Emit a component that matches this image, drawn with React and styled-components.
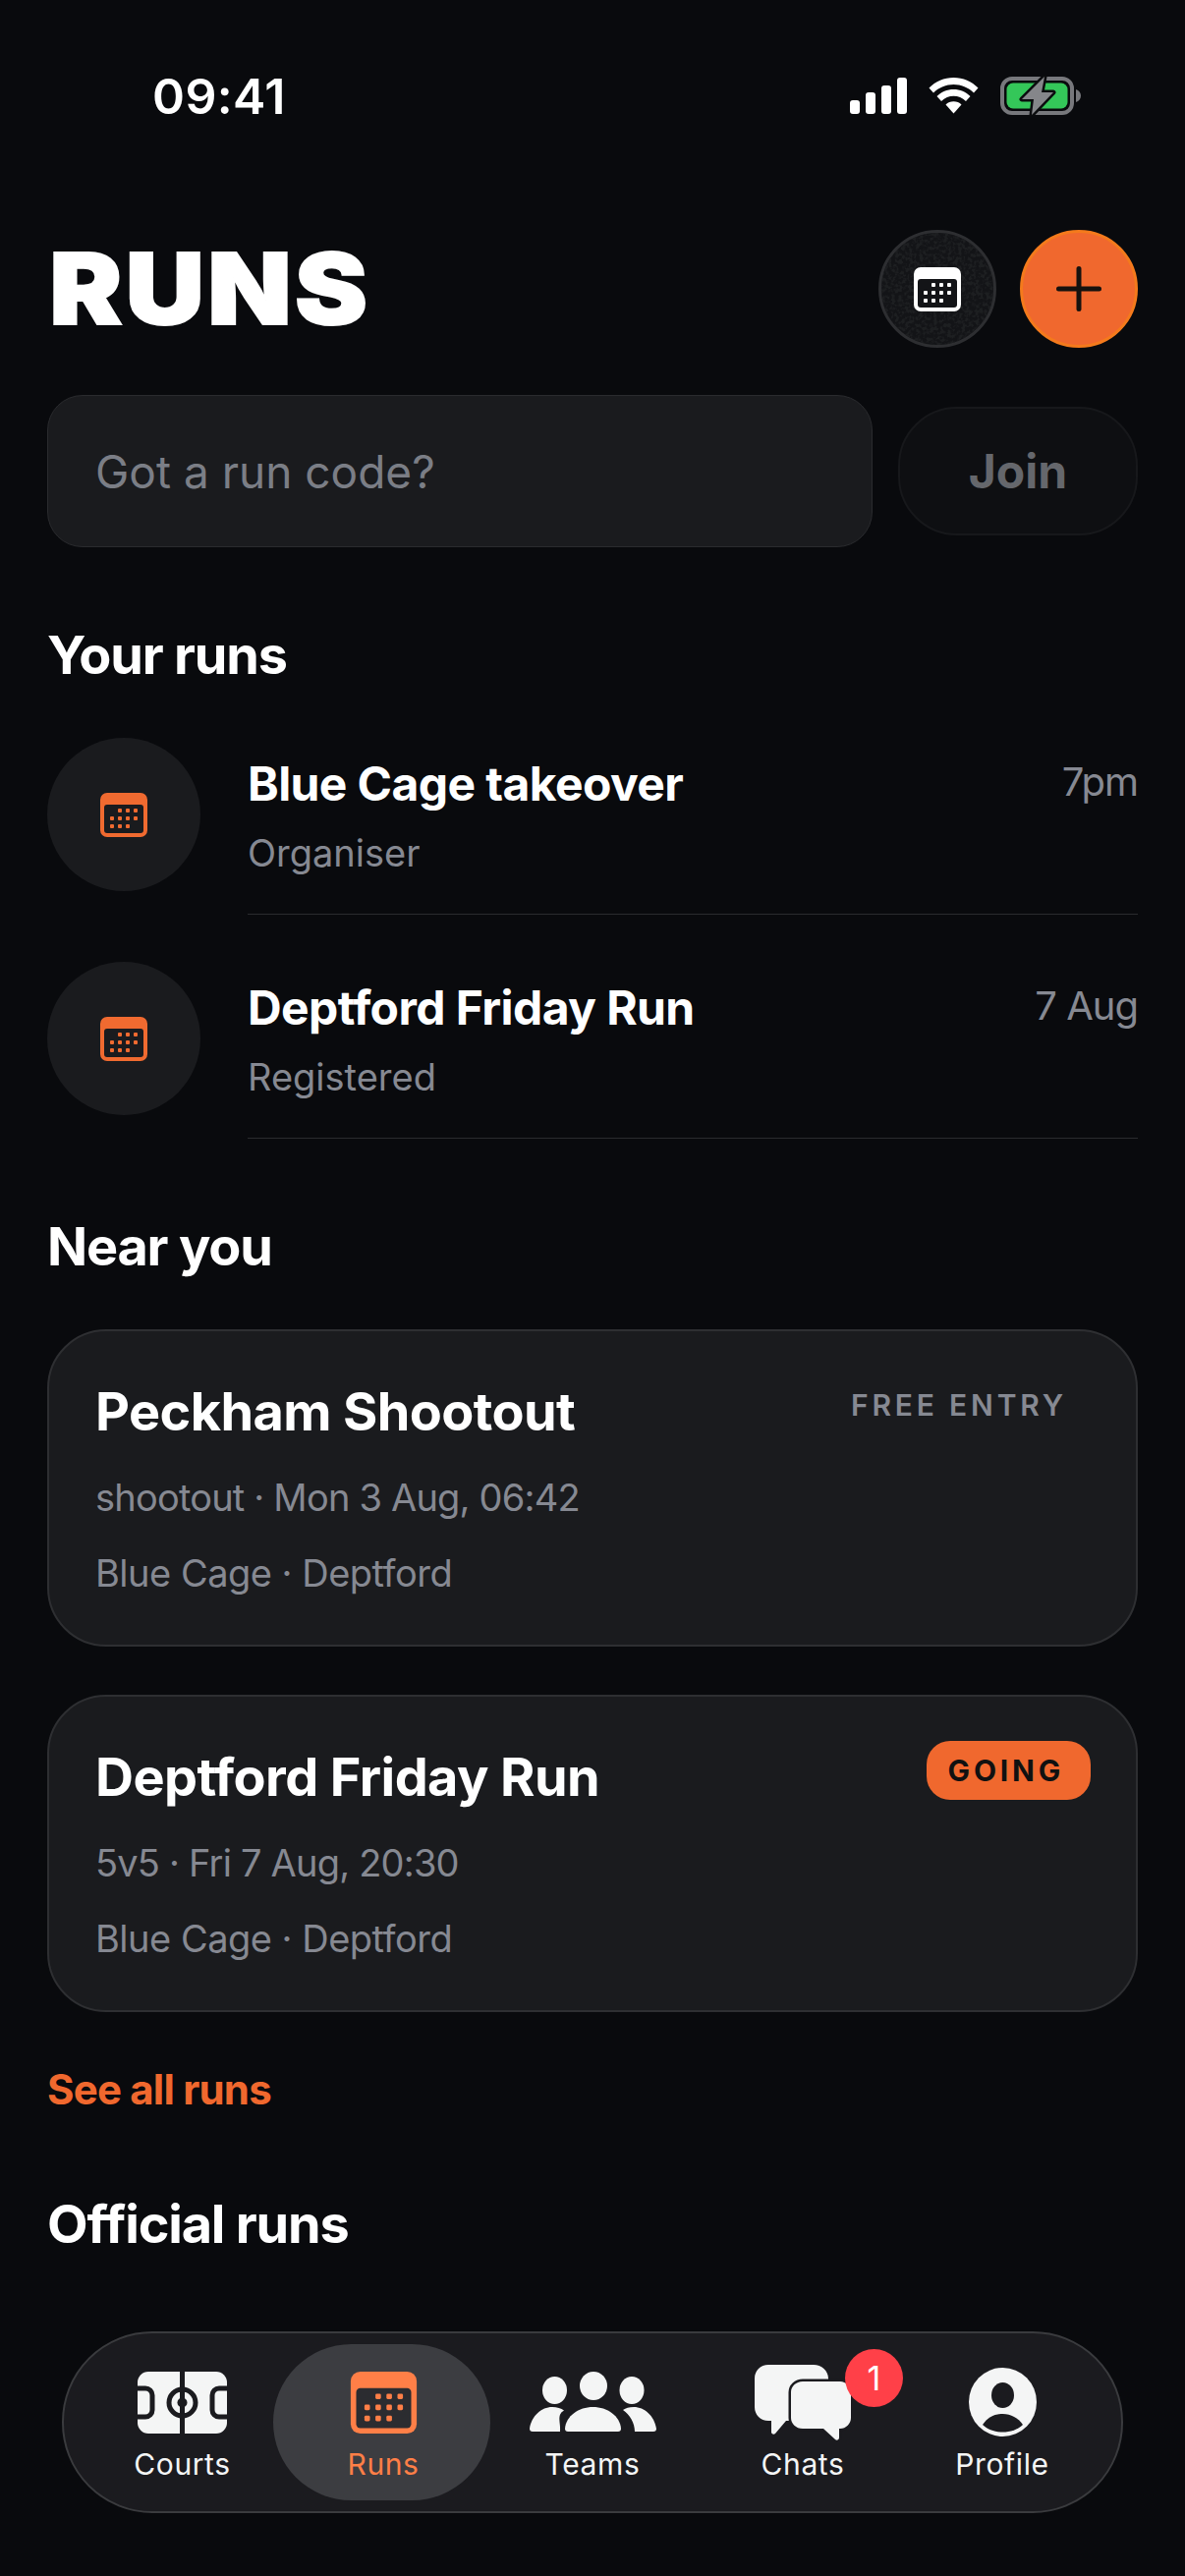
import React from 'react';
import styled, { createGlobalStyle } from 'styled-components';

const GlobalStyle = createGlobalStyle`
    * { box-sizing: border-box; }
    html, body {
        margin: 0;
        background: #090a0d;
        font-family: Inter, "Liberation Sans", sans-serif;
    }
`;

const yourRuns = [
    { title: 'Blue Cage takeover', role: 'Organiser', when: '7pm' },
    { title: 'Deptford Friday Run', role: 'Registered', when: '7 Aug' },
];

const nearRuns = [
    { title: 'Peckham Shootout', meta: 'shootout · Mon 3 Aug, 06:42', place: 'Blue Cage · Deptford', tag: 'FREE ENTRY' },
    { title: 'Deptford Friday Run', meta: '5v5 · Fri 7 Aug, 20:30', place: 'Blue Cage · Deptford', tag: 'GOING', going: true },
];

const DOTS = [
    [20, 18], [28, 18], [36, 18],
    [12, 26], [20, 26], [28, 26], [36, 26],
    [12, 34], [20, 34], [28, 34],
];

const CalendarIcon = ({ width = 48, height = 45, color, hole }) => (
    <svg width={ width } height={ height } viewBox="0 0 48 45">
        <rect width="48" height="45" rx="7" fill={ color } />
        <rect x="4" y="12" width="40" height="29" rx="3" fill={ hole } />
        { DOTS.map(([x, y]) => (
            <rect key={ `${x}-${y}` } x={ x - 2 } y={ y - 2 } width="4" height="4" rx="1" fill={ color } />
        )) }
    </svg>
);

const PlusIcon = () => (
    <svg width="46" height="46" viewBox="0 0 46 46" stroke="#16120f" strokeWidth="5" strokeLinecap="round">
        <path d="M23 2.5v41M2.5 23h41" />
    </svg>
);

// grainy fill of the calendar button
const Grain = () => (
    <GrainLayer width="114" height="114" viewBox="0 0 114 114">
        <filter id="grain" x="0" y="0" width="100%" height="100%" colorInterpolationFilters="sRGB">
            <feTurbulence type="fractalNoise" baseFrequency="0.28" numOctaves="2" seed="4" />
            <feColorMatrix values="0 0 0 0 0.115  0 0 0 0 0.12  0 0 0 0 0.13  5 0 0 0 -2.2" />
        </filter>
        <rect width="114" height="114" filter="url(#grain)" />
    </GrainLayer>
);

const SignalIcon = () => (
    <svg width="58" height="37" viewBox="0 0 58 37" fill="#fff">
        <rect x="0" y="23" width="10" height="14" rx="3" />
        <rect x="16" y="15" width="10" height="22" rx="3" />
        <rect x="32" y="8" width="10" height="29" rx="3" />
        <rect x="48" y="0" width="10" height="37" rx="3" />
    </svg>
);

const WifiIcon = () => (
    <svg width="51" height="37" viewBox="0 0 51 37" fill="#fff">
        <path d="M0.5 10.5C7 4 16 0 25.5 0S44 4 50.5 10.5L46 15.5C40.5 10 33 7 25.5 7S10.5 10 5 15.5Z" />
        <path d="M8.5 19C13 14.5 19 12 25.5 12S38 14.5 42.5 19L38 24C34.5 20.5 30 18.8 25.5 18.8S16.5 20.5 13 24Z" />
        <path d="M17.5 27.5C19.5 25.5 22.5 24.3 25.5 24.3S31.5 25.5 33.5 27.5L25.5 36.5Z" />
    </svg>
);

const BatteryIcon = () => (
    <svg width="82" height="41" viewBox="0 0 82 41">
        <rect x="2" y="3" width="71" height="35" rx="10" fill="none" stroke="#77787c" strokeWidth="4" />
        <rect x="6.5" y="7.5" width="62" height="26" rx="6.5" fill="#34c759" />
        <path d="M77 14c3 1 5 3.500 5 6.500s-2 5.500-5 6.500z" fill="#77787c" />
        <path
            d="M45 1L22 24H34L32 40L54 17H42Z"
            fill="#85868a"
            stroke="#0b0c0e"
            strokeWidth="5"
            strokeLinejoin="round"
            paintOrder="stroke"
        />
    </svg>
);

const CourtIcon = () => (
    <svg width="91" height="63" viewBox="0 0 91 63">
        <rect width="91" height="63" rx="11" fill="#f4f5f5" />
        <g fill="none" stroke="#1b1b1f" strokeWidth="5">
            <path d="M45.500 0v63" />
            <circle cx="45.500" cy="31.500" r="13.500" />
            <path d="M0 17h8a7 7 0 0 1 7 7v15a7 7 0 0 1-7 7H0" />
            <path d="M91 17h-8a7 7 0 0 0-7 7v15a7 7 0 0 0 7 7h8" />
        </g>
        <circle cx="45.500" cy="31.500" r="5" fill="#1b1b1f" />
    </svg>
);

const TeamsIcon = () => (
    <svg width="130" height="62" viewBox="0 0 130 62" fill="#f4f5f5">
        <ellipse cx="26.500" cy="19" rx="12.500" ry="14" />
        <ellipse cx="66" cy="14.500" rx="14" ry="14.500" />
        <ellipse cx="105" cy="19" rx="12.500" ry="14" />
        <path d="M37 58C38 45 51 36 65.500 36S93 45 94 58a3 3 0 0 1-3 3H40a3 3 0 0 1-3-3Z" />
        <path d="M1 58C3 45 13 36 24 36c5 0 9 1.500 12 3.500C28 44 33 52 32 61H4a3 3 0 0 1-3-3Z" />
        <path d="M130 58C128 45 118 36 107 36c-5 0-8 1-11 3 7 5 12 13 12 22H127a3 3 0 0 0 3-3Z" />
    </svg>
);

const ChatsIcon = () => (
    <svg width="98" height="77" viewBox="0 0 98 77" fill="#f4f5f5">
        <path d="M14 0H60c8 0 15 6 15 14v43H32L21 70c-1.500 1.500-4 .5-4-1.500V57H14C6 57 0 51 0 43V14C0 6 6 0 14 0Z" />
        <path
            d="M49 17H87c6 0 11 5 11 11V54c0 6-5 11-11 11H86V74c0 2.500-2.500 3.500-4 2L70 65H49c-7 0-12-5-12-11V28c0-6 5-11 12-11Z"
            stroke="#1b1b1f"
            strokeWidth="5"
            paintOrder="stroke"
        />
    </svg>
);

const ProfileIcon = () => (
    <svg width="69" height="70" viewBox="0 0 69 70">
        <ellipse cx="34.500" cy="35" rx="34.500" ry="35" fill="#f4f5f5" />
        <ellipse cx="34.500" cy="28" rx="11.500" ry="13" fill="#1b1b1f" />
        <path d="M14 58C19 51 26 47 34.500 47S50 51 55 58C50 63 42 65.500 34.500 65.500S19 63 14 58Z" fill="#1b1b1f" />
    </svg>
);

const App = () => (
    <Page>
        <GlobalStyle />
        <StatusBar>
            <Clock>09:41</Clock>
            <StatusIcons>
                <SignalIcon />
                <WifiIcon />
                <BatteryIcon />
            </StatusIcons>
        </StatusBar>

        <Header>
            <PageTitle>RUNS</PageTitle>
            <HeaderActions>
                <RoundButton aria-label="Calendar">
                    <Grain />
                    <CalendarIcon color="#fff" hole="#131417" />
                </RoundButton>
                <RoundButton $primary aria-label="New run">
                    <PlusIcon />
                </RoundButton>
            </HeaderActions>
        </Header>

        <JoinRow>
            <CodeInput placeholder="Got a run code?" />
            <JoinButton>Join</JoinButton>
        </JoinRow>

        <SectionTitle>Your runs</SectionTitle>
        { yourRuns.map(run => (
            <RunRow key={ run.title }>
                <RunAvatar>
                    <CalendarIcon color="#f06a30" hole="#1a1b1e" />
                </RunAvatar>
                <RunBody>
                    <RunTitleLine>
                        <RunTitle>{ run.title }</RunTitle>
                        <RunWhen>{ run.when }</RunWhen>
                    </RunTitleLine>
                    <RunRole>{ run.role }</RunRole>
                </RunBody>
            </RunRow>
        )) }

        <SectionTitle>Near you</SectionTitle>
        <CardList>
            { nearRuns.map(run => (
                <Card key={ run.title }>
                    <CardTop>
                        <CardTitle>{ run.title }</CardTitle>
                        <Tag $going={ run.going }>{ run.tag }</Tag>
                    </CardTop>
                    <CardMeta>{ run.meta }</CardMeta>
                    <CardPlace>{ run.place }</CardPlace>
                </Card>
            )) }
        </CardList>

        <SeeAll>See all runs</SeeAll>
        <SectionTitle>Official runs</SectionTitle>

        <TabBar>
            <Tab>
                <TabIcon><CourtIcon /></TabIcon>
                <TabLabel>Courts</TabLabel>
            </Tab>
            <Tab $active>
                <TabIcon><CalendarIcon width={ 69 } height={ 63 } color="#ff7f47" hole="#2b2c30" /></TabIcon>
                <TabLabel $active>Runs</TabLabel>
            </Tab>
            <Tab>
                <TabIcon><TeamsIcon /></TabIcon>
                <TabLabel>Teams</TabLabel>
            </Tab>
            <Tab>
                <TabIcon>
                    <ChatsIcon />
                    <Badge>1</Badge>
                </TabIcon>
                <TabLabel>Chats</TabLabel>
            </Tab>
            <Tab>
                <TabIcon><ProfileIcon /></TabIcon>
                <TabLabel>Profile</TabLabel>
            </Tab>
        </TabBar>
    </Page>
);

const Page = styled.div`
    position: relative;
    width: 1206px;
    height: 2622px;
    padding: 0 48px;
    overflow: hidden;
    background: #090a0d;
    color: #fff;
`;

const StatusBar = styled.div`
    display: flex;
    justify-content: space-between;
    align-items: flex-start;
    height: 234px;
    padding: 70px 58px 0 107px;
`;

const Clock = styled.div`
    font-size: 50px;
    line-height: 56px;
    font-weight: 600;
    letter-spacing: 0.4px;
`;

const StatusIcons = styled.div`
    display: flex;
    align-items: center;
    gap: 22px;
    margin-top: 7px;
`;

const Header = styled.div`
    display: flex;
    justify-content: space-between;
    align-items: center;
    height: 120px;
`;

const PageTitle = styled.h1`
    margin: 0;
    padding-left: 2px;
    font-size: 100px;
    line-height: 120px;
    font-weight: 900;
    letter-spacing: 3px;
    -webkit-text-stroke: 2px #fff;
    transform: scaleX(1.11);
    transform-origin: left center;
`;

const HeaderActions = styled.div`
    display: flex;
    gap: 24px;
`;

const RoundButton = styled.button`
    position: relative;
    display: flex;
    align-items: center;
    justify-content: center;
    width: 120px;
    height: 120px;
    padding: 0;
    border-radius: 50%;
    border: 3px solid ${ ({ $primary }) => $primary ? '#f47a1c' : '#2d2e31' };
    background: ${ ({ $primary }) => $primary ? '#f0682e' : '#131417' };
    overflow: hidden;
    svg {
        position: relative;
    }
`;

const GrainLayer = styled.svg`
    && {
        position: absolute;
    }
    inset: 0;
`;

const JoinRow = styled.div`
    display: flex;
    align-items: center;
    gap: 26px;
    margin-top: 48px;
`;

const CodeInput = styled.input`
    width: 840px;
    height: 155px;
    padding: 0 48px;
    border: 1px solid #2a2b2e;
    border-radius: 36px;
    outline: 0;
    background: #1a1b1e;
    color: #fff;
    font-family: inherit;
    font-size: 46px;
    &::placeholder {
        color: #7b7e86;
        opacity: 1;
    }
`;

const JoinButton = styled.button`
    width: 244px;
    height: 131px;
    padding: 0;
    border: 2px solid #17181b;
    border-radius: 60px;
    background: #0e0f12;
    color: #65676c;
    font-family: inherit;
    font-size: 48px;
    font-weight: 700;
`;

const SectionTitle = styled.h2`
    margin: 80px 0 54px;
    font-size: 54px;
    line-height: 60px;
    font-weight: 700;
    letter-spacing: -1.2px;
`;

const RunRow = styled.div`
    display: flex;
    gap: 48px;
    margin-bottom: 48px;
    &:last-of-type {
        margin-bottom: 0;
    }
`;

const RunAvatar = styled.div`
    display: flex;
    flex: none;
    align-items: center;
    justify-content: center;
    width: 156px;
    height: 156px;
    border-radius: 50%;
    background: #1a1b1e;
`;

const RunBody = styled.div`
    flex: 1;
    padding: 22px 0 42px;
    border-bottom: 1px solid #2a2b2e;
`;

const RunTitleLine = styled.div`
    display: flex;
    justify-content: space-between;
    align-items: flex-start;
`;

const RunTitle = styled.div`
    font-size: 48px;
    line-height: 50px;
    font-weight: 700;
    letter-spacing: -0.6px;
`;

const RunWhen = styled.div`
    margin-top: -2px;
    font-size: 40px;
    line-height: 50px;
    letter-spacing: -1px;
    color: #868992;
`;

const RunRole = styled.div`
    margin-top: 25px;
    font-size: 38px;
    line-height: 40px;
    color: #868992;
`;

const CardList = styled.div`
    display: flex;
    flex-direction: column;
    gap: 49px;
`;

const Card = styled.div`
    height: 323px;
    padding: 45px 46px 0 47px;
    border: 2px solid #2e2f32;
    border-radius: 60px;
    background: #1a1b1e;
`;

const CardTop = styled.div`
    display: flex;
    justify-content: space-between;
    align-items: flex-start;
`;

const CardTitle = styled.div`
    margin-top: 9px;
    font-size: 54px;
    line-height: 56px;
    font-weight: 700;
    letter-spacing: -0.6px;
`;

const Tag = styled.div`
    height: 60px;
    padding: 0 ${ ({ $going }) => $going ? '27px 0 22px' : '24px 0 0' };
    border-radius: 24px;
    font-size: 30px;
    line-height: 60px;
    letter-spacing: 3.8px;
    font-weight: ${ ({ $going }) => $going ? 700 : 600 };
    background: ${ ({ $going }) => $going ? '#f0682e' : 'transparent' };
    color: ${ ({ $going }) => $going ? '#111' : '#868992' };
`;

const CardMeta = styled.div`
    margin-top: 37px;
    font-size: 38px;
    line-height: 44px;
    letter-spacing: -0.8px;
    color: #868992;
`;

const CardPlace = styled(CardMeta)`
    margin-top: 33px;
    letter-spacing: -0.5px;
`;

const SeeAll = styled.div`
    margin-top: 54px;
    padding-bottom: 2px;
    font-size: 42px;
    line-height: 50px;
    font-weight: 700;
    letter-spacing: -0.8px;
    color: #f0682e;
`;

const TabBar = styled.nav`
    position: absolute;
    left: 63px;
    bottom: 64px;
    display: grid;
    grid-template-columns: 185px 221px 208px 220px 186px;
    width: 1080px;
    height: 185px;
    padding: 11px 28px;
    border: 2px solid #3a3b3e;
    border-radius: 92px;
    background: #1b1b1f;
`;

const Tab = styled.div`
    display: flex;
    flex-direction: column;
    align-items: center;
    padding-left: ${ ({ $active }) => $active ? '3px' : '0' };
    border-radius: 80px;
    background: ${ ({ $active }) => $active ? '#3c3d41' : 'transparent' };
`;

const TabIcon = styled.div`
    position: relative;
    display: flex;
    align-items: center;
    justify-content: center;
    height: 70px;
    margin-top: 24px;
`;

const TabLabel = styled.div`
    margin-top: 8px;
    font-size: 30px;
    line-height: 40px;
    font-weight: 400;
    letter-spacing: 0.6px;
    color: ${ ({ $active }) => $active ? '#ff7f47' : '#f4f5f5' };
`;

const Badge = styled.div`
    position: absolute;
    top: -19px;
    right: -53px;
    width: 59px;
    height: 59px;
    border-radius: 50%;
    background: #ff4048;
    color: #fff;
    font-size: 34px;
    line-height: 59px;
    text-align: center;
`;

export default App;
